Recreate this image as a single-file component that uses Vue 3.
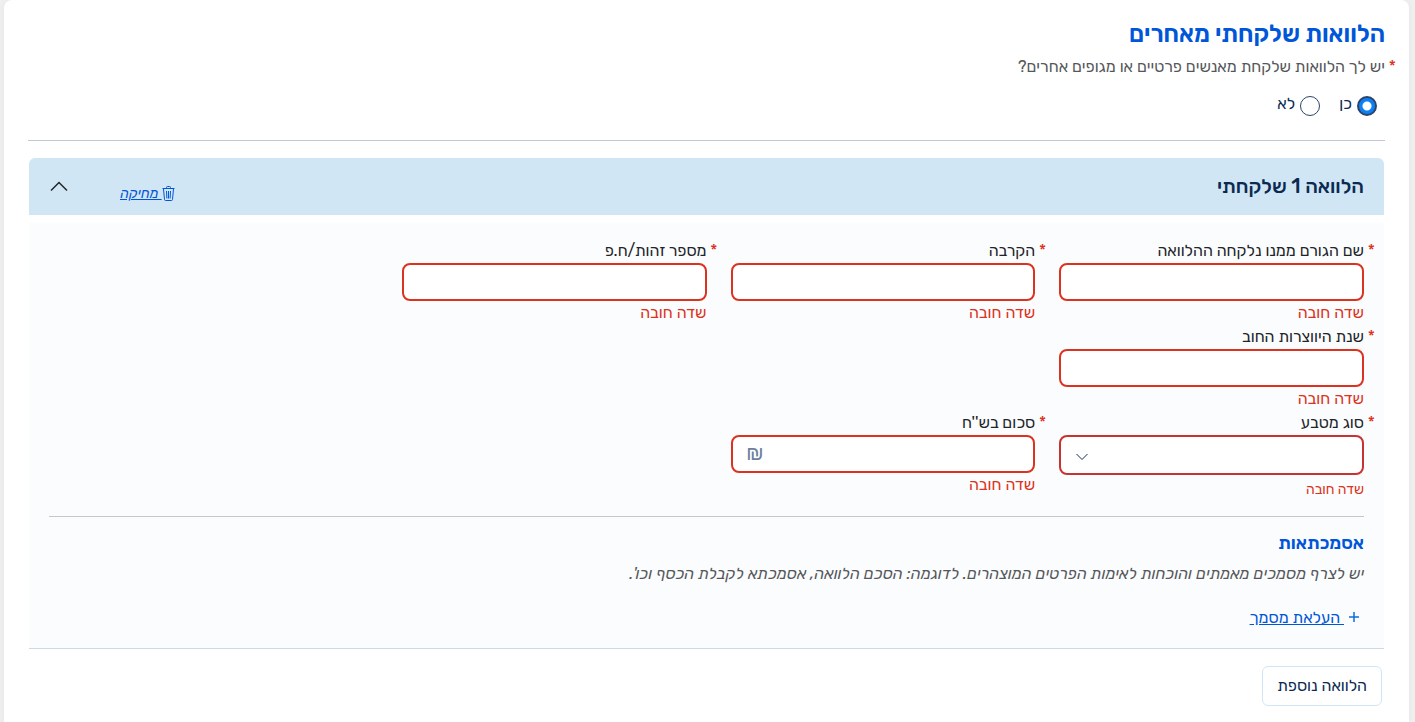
<template>
  <main class="card" dir="rtl">
    <h1 class="title">הלוואות שלקחתי מאחרים</h1>
    <fieldset class="question">
      <legend class="question-text required">יש לך הלוואות שלקחת מאנשים פרטיים או מגופים אחרים?</legend>
      <div class="radios">
        <label v-for="option in options" :key="option.value" class="radio">
          <input v-model="hasLoans" type="radio" name="hasLoans" :value="option.value" />
          <span>{{ option.label }}</span>
        </label>
      </div>
    </fieldset>

    <section class="loan">
      <header class="loan-header">
        <h2>הלוואה 1 שלקחתי</h2>
        <a href="#" class="delete" @click.prevent="clearLoan">
          <svg width="13" height="16" viewBox="0 0 13 16" fill="none" stroke="currentColor" aria-hidden="true">
            <path d="M.5 2.5h12M4.500 2.500v-1q0-1 1-1h2q1 0 1 1v1M1.500 3l1 10.500q.1 1 1 1h6q.9 0 1-1l1-10.500M4.500 5l.4 7.500M6.500 5v7.500M8.500 5l-.4 7.500" />
          </svg>
          <span class="delete-text">&nbsp;מחיקה</span>
        </a>
        <button type="button" class="toggle" aria-label="סגירה" @click="open = !open">
          <svg width="18" height="11" viewBox="0 0 18 11" fill="none" stroke="#212529" stroke-width="1.5" aria-hidden="true">
            <path :d="open ? 'M1 9.5l8-8 8 8' : 'M1 1.5l8 8 8-8'" />
          </svg>
        </button>
      </header>

      <div v-if="open" class="loan-body">
        <div class="fields">
          <div v-for="field in fields" :key="field.id" class="field" :class="{ first: field.first }">
            <label :for="field.id" class="required">{{ field.label }}</label>
            <div v-if="field.type === 'select'" class="control">
              <select :id="field.id" v-model="form[field.id]" class="select">
                <option value=""></option>
                <option value="ils">₪</option>
                <option value="usd">$</option>
              </select>
              <svg class="arrow" width="12" height="8" viewBox="0 0 12 8" fill="none" stroke="#12305a" aria-hidden="true">
                <path d="M.5 1L6 6.5 11.5 1" />
              </svg>
            </div>
            <div v-else class="control">
              <input :id="field.id" v-model="form[field.id]" type="text" />
              <span v-if="field.suffix" class="suffix">{{ field.suffix }}</span>
            </div>
            <p v-if="!form[field.id]" class="error" :class="{ small: field.type === 'select' }">שדה חובה</p>
          </div>
        </div>

        <div class="documents">
          <h3>אסמכתאות</h3>
          <p class="hint">יש לצרף מסמכים מאמתים והוכחות לאימות הפרטים המוצהרים. לדוגמה: הסכם הלוואה, אסמכתא לקבלת הכסף וכו'.</p>
          <a href="#" class="upload" @click.prevent>
            <svg width="10" height="12" viewBox="0 0 10 12" stroke="#0d6fdc" stroke-width="1.5" aria-hidden="true">
              <path d="M5 0v10M0 5h10" />
            </svg>
            <span class="upload-text">&nbsp;העלאת מסמך</span>
          </a>
        </div>
      </div>
    </section>

    <button type="button" class="add">הלוואה נוספת</button>
  </main>
</template>

<script setup>
import { reactive, ref } from 'vue';

const hasLoans = ref('yes');
const open = ref(true);

const options = [
  { value: 'yes', label: 'כן' },
  { value: 'no', label: 'לא' },
];

// first: the field opens a new row
const fields = [
  { id: 'lender', label: 'שם הגורם ממנו נלקחה ההלוואה' },
  { id: 'relation', label: 'הקרבה' },
  { id: 'idNumber', label: 'מספר זהות/ח.פ' },
  { id: 'year', label: 'שנת היווצרות החוב', first: true },
  { id: 'currency', label: 'סוג מטבע', type: 'select', first: true },
  { id: 'amount', label: "סכום בש''ח", suffix: '₪' },
];

const form = reactive({
  lender: '',
  relation: '',
  idNumber: '',
  year: '',
  currency: '',
  amount: '',
});

const clearLoan = () => {
  Object.keys(form).forEach(key => {
    form[key] = '';
  });
};
</script>

<style>
body {
  background: #f0f0f0;
}
</style>

<style scoped>
* {
  box-sizing: border-box;
}

.card {
  margin: 0 6px 0 4px;
  padding: 20px 24px 16px;
  min-height: 100vh;
  background: #fff;
  border-radius: 8px 8px 0 0;
  box-shadow: 0 0 8px rgba(0, 0, 0, 0.05);
  font-family: Rubik, 'Open Sans', 'Liberation Sans', sans-serif;
  font-size: 16px;
  line-height: 24px;
  color: #212529;
}

h1,
h2,
h3,
p {
  margin: 0;
}

input,
select,
button {
  font: inherit;
}

a {
  color: #0056d9;
}

.title {
  font-size: 24px;
  line-height: 28px;
  font-weight: 600;
  color: #0056d9;
}

.question {
  margin: 0;
  padding: 0 0 24px;
  border: 0;
  border-bottom: 1px solid #c0c8da;
}

.question-text {
  padding: 7px 0 0;
  color: #55575a;
}

.required {
  position: relative;
}

.required::before {
  content: '*';
  position: absolute;
  right: -11px;
  color: #dc3220;
}

.radios {
  display: flex;
  gap: 19px;
  padding: 13px 8px 0;
}

.radio {
  display: flex;
  gap: 5px;
  color: #0b2a52;
}

.radio input {
  appearance: none;
  width: 20px;
  height: 20px;
  margin: 4px 0 0;
  border: 1px solid #2b4468;
  border-radius: 50%;
  background: #fff;
}

.radio input:checked {
  border-width: 2px;
  background: radial-gradient(circle, #fff 4px, #0d80f5 5px);
}

.loan {
  margin: 17px 1px 0;
  border-bottom: 1px solid #d0d8e4;
}

.loan-header {
  display: flex;
  align-items: center;
  height: 57px;
  padding: 0 20px 0 17px;
  background: #d1e6f4;
  border-radius: 6px 6px 0 0;
}

.loan-header h2 {
  flex: 1;
  padding-bottom: 2px;
  font-size: 20px;
  font-weight: 500;
  color: #0b2a52;
}

.delete {
  display: flex;
  align-items: center;
  padding-top: 15px;
  font-size: 14px;
  font-style: italic;
  text-decoration: none;
}

.delete-text,
.upload-text {
  text-decoration: underline;
}

.toggle {
  display: flex;
  margin-right: 48px;
  padding: 4px;
  border: 0;
  background: none;
  cursor: pointer;
}

.loan-body {
  margin-top: 8px;
  padding: 16px 20px 18px;
  background: #fbfcfe;
}

.fields {
  display: grid;
  grid-template-columns: repeat(4, 1fr);
  column-gap: 24px;
  padding: 0 0 16px 24px;
  border-bottom: 1px solid #c4c7cc;
}

.field.first {
  grid-column-start: 1;
}

.field label {
  display: block;
}

.control {
  position: relative;
}

.control input,
.control select {
  display: block;
  width: 100%;
  height: 38px;
  padding: 4px 12px;
  border: 2px solid #dc3220;
  border-radius: 8px;
  background: #fff;
  color: #212529;
}

.control .select {
  appearance: none;
  height: 40px;
  border-color: #c83232;
}

.arrow {
  position: absolute;
  left: 17px;
  top: 18px;
  pointer-events: none;
}

.suffix {
  position: absolute;
  left: 16px;
  top: 6px;
  font-size: 20px;
  color: #6c7f9c;
}

.error {
  color: #dc3220;
}

.error.small {
  padding-top: 5px;
  font-size: 14px;
  line-height: 20px;
}

.documents h3 {
  margin-top: 14px;
  font-size: 18px;
  font-weight: 600;
  color: #0056d9;
}

.hint {
  margin-top: 7px;
  color: #55575a;
  font-style: italic;
}

.upload {
  display: flex;
  align-items: center;
  gap: 5px;
  width: fit-content;
  margin-top: 20px;
  padding-right: 5px;
  text-decoration: none;
}

.add {
  display: block;
  margin: 17px 3px 0;
  height: 40px;
  padding: 0 14px;
  border: 1px solid #d1e6f4;
  border-radius: 6px;
  background: #fff;
  color: #0b2a52;
  cursor: pointer;
}
</style>
